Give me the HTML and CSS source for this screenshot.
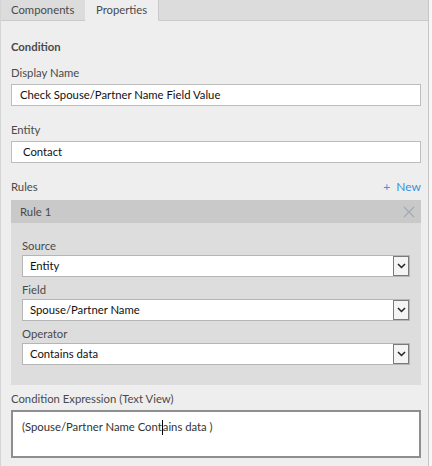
FILE: index.html
```html
<!DOCTYPE html>
<html lang="en">
<head>
    <meta charset="UTF-8">
    <title>Properties</title>
    <link rel="stylesheet" href="styles.css">
</head>
<body>
    <div class="panel">
        <div class="tabs">
            <div class="tab first">Components</div>
            <div class="tab active">Properties</div>
            <div class="tab-fill"></div>
        </div>

        <div class="content">
            <div class="section-title">Condition</div>

            <label class="lbl">Display Name</label>
            <div class="textbox">Check Spouse/Partner Name Field Value</div>

            <label class="lbl">Entity</label>
            <div class="textbox indent">Contact</div>

            <div class="rules-head">
                <span class="lbl">Rules</span>
                <span class="new-link">+&nbsp;&nbsp;New</span>
            </div>

            <div class="rule">
                <div class="rule-header">
                    <span>Rule 1</span>
                    <svg class="close" width="12" height="12" viewBox="0 0 12 12">
                        <path d="M1 1 L11 11 M11 1 L1 11" stroke="#a3a9b6" stroke-width="1.2" fill="none"/>
                    </svg>
                </div>
                <div class="rule-body">
                    <label class="lbl small">Source</label>
                    <div class="select">
                        <span>Entity</span>
                        <span class="arrow"><svg width="9" height="6" viewBox="0 0 9 6"><path d="M1 1 L4.5 4.5 L8 1" stroke="#222" stroke-width="1.5" fill="none"/></svg></span>
                    </div>

                    <label class="lbl small">Field</label>
                    <div class="select">
                        <span>Spouse/Partner Name</span>
                        <span class="arrow"><svg width="9" height="6" viewBox="0 0 9 6"><path d="M1 1 L4.5 4.5 L8 1" stroke="#222" stroke-width="1.5" fill="none"/></svg></span>
                    </div>

                    <label class="lbl small">Operator</label>
                    <div class="select">
                        <span>Contains data</span>
                        <span class="arrow"><svg width="9" height="6" viewBox="0 0 9 6"><path d="M1 1 L4.5 4.5 L8 1" stroke="#222" stroke-width="1.5" fill="none"/></svg></span>
                    </div>
                </div>
            </div>

            <label class="lbl">Condition Expression (Text View)</label>
            <div class="expression">(Spouse/Partner Name Cont<span class="caret"></span>ains data )</div>
        </div>
    </div>
</body>
</html>
```

FILE: styles.css
```css
body {
    margin: 0;
    font-family: Lato, "Noto Sans", sans-serif;
    font-size: 11.3px;
    line-height: 16px;
    color: #333;
    background-color: #f6f6f6;
}
.panel {
    width: 429px;
    height: 466px;
    background-color: #eeeeee;
    border-left: 1px solid #d4d4d4;
    border-right: 1px solid #c6c6c6;
    box-sizing: border-box;
}
.tabs {
    display: flex;
    height: 21px;
    background-color: #dcdcdc;
}
.tab {
    line-height: 20px;
    color: #4a4a4a;
    border-bottom: 1px solid #cacaca;
}
.tab.first {
    width: 84px;
    padding-left: 10px;
    box-sizing: border-box;
}
.tab.active {
    width: 74px;
    padding-left: 11px;
    box-sizing: border-box;
    background-color: #eeeeee;
    border-bottom: 1px solid #eeeeee;
    border-right: 1px solid #c8c8c8;
}
.tab-fill {
    flex: 1;
    border-bottom: 1px solid #cacaca;
}
.content {
    padding: 18px 7px 0 10px;
}
.section-title {
    font-weight: bold;
    color: #4a4a4a;
    margin-bottom: 10px;
}
.lbl {
    display: block;
    color: #4a4a4a;
    line-height: 16px;
    margin-bottom: 3px;
}
.lbl.small {
    margin-bottom: 1px;
}
.textbox {
    height: 20px;
    line-height: 20px;
    background-color: #fff;
    border: 1px solid #bdbdbd;
    padding: 0 8px;
    color: #111;
    margin-bottom: 16px;
}
.textbox.indent {
    padding-left: 11px;
}
.rules-head {
    display: flex;
    justify-content: space-between;
    align-items: flex-end;
    margin-bottom: 2px;
}
.new-link {
    color: #3d90dd;
    font-size: 12px;
    line-height: 16px;
    margin-bottom: 3px;
}
.rule {
    margin-bottom: 6px;
}
.rule-header {
    display: flex;
    justify-content: space-between;
    align-items: center;
    height: 23px;
    padding: 0 6px 0 9px;
    background-color: #c9c9c9;
    color: #4a4a4a;
}
.rule-body {
    background-color: #dddddd;
    padding: 15px 11px 20px 11px;
}
.select {
    display: flex;
    justify-content: space-between;
    align-items: center;
    height: 20px;
    background-color: #fff;
    border: 1px solid #b5b5b5;
    padding-left: 7px;
    color: #111;
    margin-bottom: 5px;
}
.select:last-child {
    margin-bottom: 0;
}
.arrow {
    display: flex;
    align-items: center;
    justify-content: center;
    width: 14px;
    height: 18px;
    border: 1px solid #7a7a7a;
    background-color: #f4f4f4;
}
.expression {
    background-color: #fff;
    border: 2px solid #8e8e8e;
    padding: 7px 9px;
    box-sizing: border-box;
    height: 48px;
    color: #333;
    margin-top: 3px;
}
.caret {
    display: inline-block;
    width: 1px;
    height: 15px;
    background-color: #000;
    vertical-align: -4px;
}
```
